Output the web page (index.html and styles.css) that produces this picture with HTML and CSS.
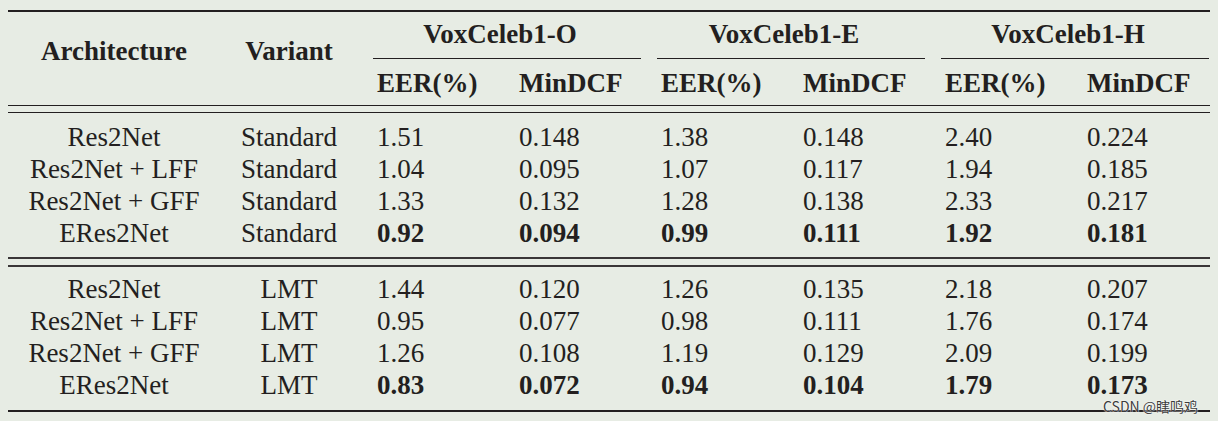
FILE: index.html
```html
<!DOCTYPE html>
<html>
<head>
<meta charset="utf-8">
<link rel="stylesheet" href="styles.css">
</head>
<body>
<div class="page">
  <div class="tbl">
    <div class="rule-top"></div>
    <div class="head">
      <div class="hcell span-rows c-center">Architecture</div>
      <div class="hcell span-rows c-center">Variant</div>
      <div class="group"><div class="group-title">VoxCeleb1-O</div><div class="cline"></div></div>
      <div class="group"><div class="group-title">VoxCeleb1-E</div><div class="cline"></div></div>
      <div class="group"><div class="group-title">VoxCeleb1-H</div><div class="cline"></div></div>
      <div class="sub">EER(%)</div><div class="sub">MinDCF</div>
      <div class="sub">EER(%)</div><div class="sub">MinDCF</div>
      <div class="sub">EER(%)</div><div class="sub">MinDCF</div>
    </div>
    <div class="double thin"></div>
    <div class="body first">
      <div class="c-center">Res2Net</div><div class="c-center">Standard</div><div class="num">1.51</div><div class="num">0.148</div><div class="num">1.38</div><div class="num">0.148</div><div class="num">2.40</div><div class="num">0.224</div>
      <div class="c-center">Res2Net + LFF</div><div class="c-center">Standard</div><div class="num">1.04</div><div class="num">0.095</div><div class="num">1.07</div><div class="num">0.117</div><div class="num">1.94</div><div class="num">0.185</div>
      <div class="c-center">Res2Net + GFF</div><div class="c-center">Standard</div><div class="num">1.33</div><div class="num">0.132</div><div class="num">1.28</div><div class="num">0.138</div><div class="num">2.33</div><div class="num">0.217</div>
      <div class="c-center">ERes2Net</div><div class="c-center">Standard</div><div class="num b">0.92</div><div class="num b">0.094</div><div class="num b">0.99</div><div class="num b">0.111</div><div class="num b">1.92</div><div class="num b">0.181</div>
    </div>
    <div class="double mid"></div>
    <div class="body second">
      <div class="c-center">Res2Net</div><div class="c-center">LMT</div><div class="num">1.44</div><div class="num">0.120</div><div class="num">1.26</div><div class="num">0.135</div><div class="num">2.18</div><div class="num">0.207</div>
      <div class="c-center">Res2Net + LFF</div><div class="c-center">LMT</div><div class="num">0.95</div><div class="num">0.077</div><div class="num">0.98</div><div class="num">0.111</div><div class="num">1.76</div><div class="num">0.174</div>
      <div class="c-center">Res2Net + GFF</div><div class="c-center">LMT</div><div class="num">1.26</div><div class="num">0.108</div><div class="num">1.19</div><div class="num">0.129</div><div class="num">2.09</div><div class="num">0.199</div>
      <div class="c-center">ERes2Net</div><div class="c-center">LMT</div><div class="num b">0.83</div><div class="num b">0.072</div><div class="num b">0.94</div><div class="num b">0.104</div><div class="num b">1.79</div><div class="num b">0.173</div>
    </div>
    <div class="rule-bottom"></div>
  </div>
  <div class="watermark">CSDN @瞎鸣鸡</div>
</div>
</body>
</html>
```
FILE: styles.css
```css
html, body {
  margin: 0;
  padding: 0;
  background: #e7ece4;
}
.page {
  position: relative;
  width: 1218px;
  height: 421px;
  background: #e7ece4;
  overflow: hidden;
}
.tbl {
  margin-left: 8px;
  padding-top: 10px;
  width: 1202px;
  font-family: "Liberation Serif", "Times New Roman", serif;
  font-size: 27px;
  line-height: 32px;
  color: #231f20;
}
.rule-top {
  height: 2px;
  background: #231f20;
}
.rule-bottom {
  height: 2px;
  background: #231f20;
}
.head, .body {
  display: grid;
  grid-template-columns: 212px 138px repeat(6, 142px);
}
.head {
  grid-template-rows: auto auto;
  font-weight: bold;
}
.span-rows {
  grid-row: 1 / 3;
  align-self: start;
  padding-top: 23px;
}
.c-center {
  text-align: center;
  white-space: nowrap;
}
.group {
  grid-column: span 2;
  padding-top: 6px;
}
.group-title {
  text-align: center;
}
.cline {
  margin: 8px 1px 0 15px;
  height: 1px;
  background: #231f20;
}
.sub {
  padding: 8px 0 6px 19px;
  white-space: nowrap;
}
.double.thin {
  height: 6px;
  border-top: 1px solid #231f20;
  border-bottom: 1px solid #231f20;
}
.double.mid {
  height: 6px;
  border-top: 2px solid #3a3637;
  border-bottom: 2px solid #3a3637;
}
.body.first {
  padding-top: 8px;
  padding-bottom: 8px;
}
.body.second {
  padding-top: 6px;
  padding-bottom: 9px;
}
.num {
  padding-left: 19px;
}
.b {
  font-weight: bold;
}
.watermark {
  position: absolute;
  left: 1103px;
  top: 400px;
  font-family: "Noto Sans CJK SC", "Liberation Sans", sans-serif;
  font-size: 14px;
  line-height: 12px;
  color: #3c3c3c;
  text-shadow: 0 0 2px #ffffff, 0 0 1px #ffffff;
  white-space: nowrap;
}
```
